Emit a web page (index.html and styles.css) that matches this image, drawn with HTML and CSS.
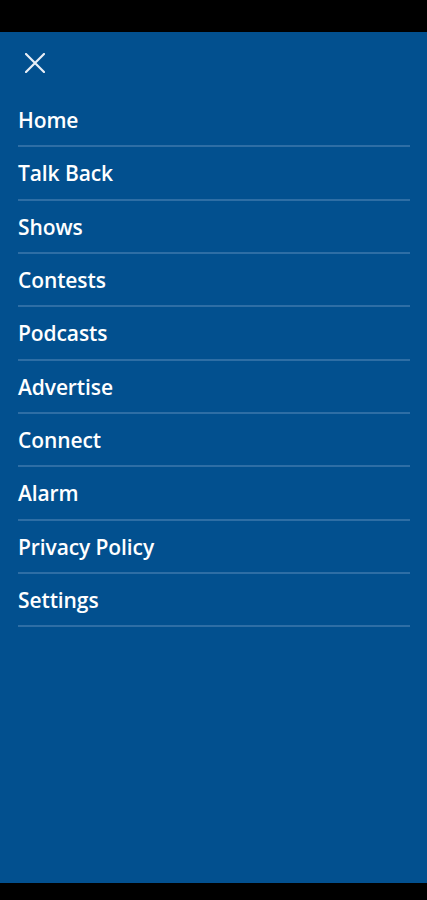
FILE: index.html
```html
<!DOCTYPE html>
<html lang="en">
<head>
<meta charset="utf-8">
<title>Menu</title>
<link rel="stylesheet" href="styles.css">
</head>
<body>
<div class="screen">
  <div class="statusbar"></div>
  <nav class="drawer">
    <div class="drawer-head">
      <button class="close" aria-label="Close">
        <svg width="20" height="20" viewBox="0 0 20 20"><path d="M1 1 L19 19 M19 1 L1 19" stroke="#e8eef6" stroke-width="2.2" stroke-linecap="round" fill="none"/></svg>
      </button>
    </div>
    <ul class="menu">
      <li class="item">Home</li>
      <li class="item">Talk Back</li>
      <li class="item">Shows</li>
      <li class="item">Contests</li>
      <li class="item">Podcasts</li>
      <li class="item">Advertise</li>
      <li class="item">Connect</li>
      <li class="item">Alarm</li>
      <li class="item">Privacy Policy</li>
      <li class="item">Settings</li>
    </ul>
  </nav>
  <div class="navbar"></div>
</div>
</body>
</html>
```
FILE: styles.css
```css
html, body {
  margin: 0;
  padding: 0;
  background: #000;
}
.screen {
  width: 427px;
  height: 900px;
  display: flex;
  flex-direction: column;
  font-family: "Open Sans", "Noto Sans", sans-serif;
}
.statusbar {
  height: 32px;
  background: #000;
  flex: none;
}
.drawer {
  flex: 1;
  background: #02508f;
  display: flex;
  flex-direction: column;
}
.drawer-head {
  height: 62px;
  display: flex;
  align-items: center;
  padding-left: 25px;
}
.close {
  background: none;
  border: 0;
  padding: 0;
  width: 20px;
  height: 20px;
  display: block;
}
.close svg { display: block; }
.menu {
  list-style: none;
  margin: 0 17px 0 18px;
  padding: 0;
}
.item {
  box-sizing: content-box;
  height: 50.33px;
  padding-top: 1px;
  border-bottom: 2px solid rgba(130, 165, 205, 0.35);
  display: flex;
  align-items: center;
  color: #fff;
  font-size: 21px;
  font-weight: 600;
  letter-spacing: -0.1px;
}
.navbar {
  height: 17px;
  background: #000;
  flex: none;
}
```
